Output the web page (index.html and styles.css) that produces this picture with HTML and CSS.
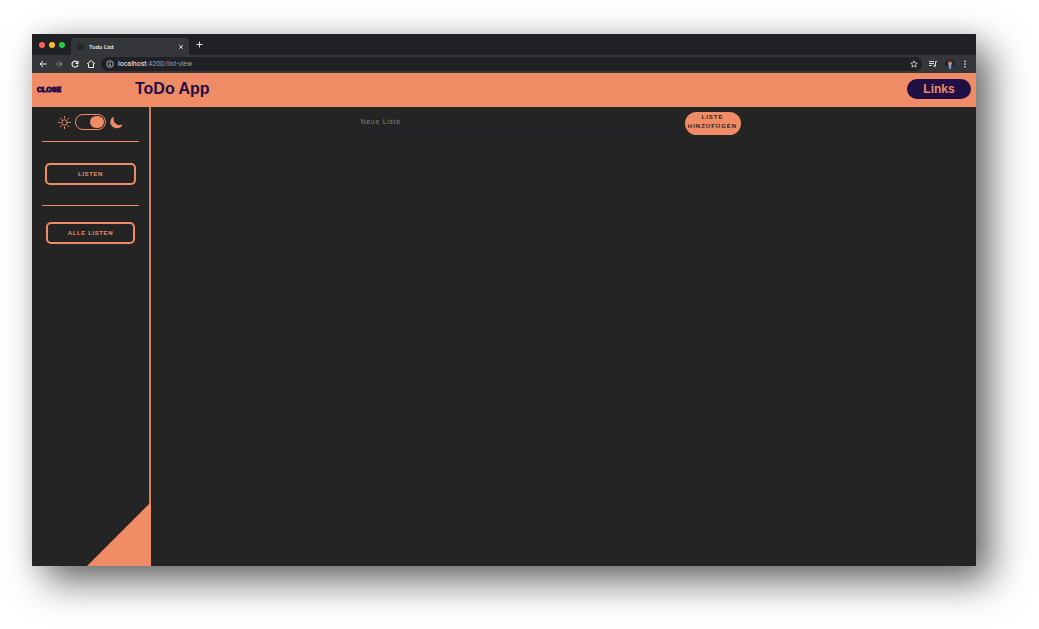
FILE: index.html
```html
<!DOCTYPE html>
<html lang="de">
<head>
<meta charset="utf-8">
<title>Todo List</title>
<link rel="stylesheet" href="styles.css">
</head>
<body>
<div class="window">
  <div class="tabbar">
    <span class="dot red"></span><span class="dot yellow"></span><span class="dot green"></span>
    <div class="tab">
      <svg class="favicon" viewBox="0 0 16 16" fill="none" stroke="#111214" stroke-width="2"><path d="M13 8v6H2V3h8M5 7l3 3 7-8"/></svg>
      <span class="tab-title">Todo List</span>
      <button class="icon-button" aria-label="Tab schließen"><svg class="tiny" viewBox="0 0 10 10" stroke="#e8eaed" stroke-width="1.500"><path d="M2 2l6 6M8 2l-6 6"/></svg></button>
    </div>
    <button class="icon-button new-tab" aria-label="Neuer Tab"><svg class="small" viewBox="0 0 14 14" stroke="#dee1e6" stroke-width="2"><path d="M7 1v12M1 7h12"/></svg></button>
  </div>
  <div class="toolbar">
    <button class="icon-button" aria-label="Zurück"><svg class="nav-icon" viewBox="0 0 16 16" fill="none" stroke="#e8eaed" stroke-width="2"><path d="M15 8H2M8 2L2 8l6 6"/></svg></button>
    <button class="icon-button" aria-label="Vor"><svg class="nav-icon" viewBox="0 0 16 16" fill="none" stroke="#85888c" stroke-width="2"><path d="M1 8h13M8 2l6 6-6 6"/></svg></button>
    <button class="icon-button" aria-label="Neu laden"><svg class="nav-icon" viewBox="0 0 16 16"><path d="M12.500 4A6 6 0 1 0 14 9.500" fill="none" stroke="#e8eaed" stroke-width="2.400"/><path d="M15 1v7H8z" fill="#e8eaed"/></svg></button>
    <button class="icon-button" aria-label="Startseite"><svg class="nav-icon" viewBox="0 0 16 16" fill="none" stroke="#e8eaed" stroke-width="2"><path d="M0 8l8-7 8 7M3 7v8h10V7"/></svg></button>
    <div class="address">
      <svg class="nav-icon" viewBox="0 0 16 16" fill="none" stroke="#dadce0" stroke-width="1.500"><circle cx="8" cy="8" r="6.500"/><path d="M8 7v5M8 4v1.700" stroke-width="2"/></svg>
      <span class="url"><span class="host">localhost</span>:4200/list-view</span>
      <button class="icon-button" aria-label="Lesezeichen"><svg class="nav-icon" viewBox="0 0 16 16" fill="none" stroke="#dadce0" stroke-width="1.600"><path d="M8 1.500l1.900 4.400 4.700.4-3.600 3.200 1.100 4.700L8 11.700l-4.100 2.500L5 9.500 1.400 6.300l4.700-.4z"/></svg></button>
    </div>
    <button class="icon-button" aria-label="Medien"><svg class="nav-icon" viewBox="0 0 16 16" fill="none" stroke="#dadce0" stroke-width="2"><path d="M0 3h10M0 7h10M0 11h6M16 3h-3v9"/><circle cx="11" cy="12" r="1.500"/></svg></button>
    <button class="icon-button" aria-label="Profil"><svg class="avatar" viewBox="0 0 20 20"><circle cx="10" cy="10" r="10" fill="#2a2328"/><path d="M3 17q1-5 7-5t7 5q-7 6-14 0z" fill="#1d4176"/><path d="M8 12h4l-1 8H9z" fill="#a9c5e6"/><ellipse cx="10" cy="8" rx="4" ry="5" fill="#c98a77"/><path d="M6 7q0-5 4-5t4 5q-4-3-8 0z" fill="#4a2a26"/></svg></button>
    <button class="icon-button menu" aria-label="Menü"><svg class="nav-icon" viewBox="0 0 16 16" fill="#e8eaed"><circle cx="8" cy="2.500" r="1.700"/><circle cx="8" cy="8" r="1.700"/><circle cx="8" cy="13.500" r="1.700"/></svg></button>
  </div>
  <header class="header">
    <button class="close">CLOSE</button>
    <h1 class="title">ToDo App</h1>
    <button class="links">Links</button>
  </header>
  <div class="content">
    <aside class="sidebar">
      <div class="theme">
        <svg class="sun" viewBox="0 0 26 26" fill="none" stroke="#f08c65" stroke-width="2" stroke-linecap="round"><circle cx="13" cy="13" r="5.500"/><path d="M13 1v3M13 22v3M1 13h3M22 13h3M4.500 4.500l2 2M19.500 19.500l2 2M4.500 21.500l2-2M19.500 6.500l2-2"/></svg>
        <input class="switch" type="checkbox" role="switch" aria-label="Dunkles Design" checked>
        <svg class="moon" viewBox="0 0 26 26" fill="#f08c65"><path d="M8 1C-1 5-2 17 6 22s17 2 19-5C14 21 4 12 8 1z"/></svg>
      </div>
      <button class="side-button">LISTEN</button>
      <div class="all">
        <button class="side-button narrow">ALLE LISTEN</button>
      </div>
      <svg class="corner" viewBox="0 0 64 64" fill="#f08c65"><path d="M64 0v64H0z"/></svg>
    </aside>
    <main class="main">
      <form class="form">
        <input class="field" type="text" placeholder="Neue Liste" aria-label="Neue Liste">
        <button class="add" type="button">LISTE HINZUFÜGEN</button>
      </form>
    </main>
  </div>
</div>
</body>
</html>
```
FILE: styles.css
```css
* { box-sizing: border-box; }
body {
  margin: 0;
  min-height: 100vh;
  padding: 34px 63px 63px 32px;
  display: flex;
  background: #fff;
  font-family: "Liberation Sans", Arial, sans-serif;
}
button { border: 0; padding: 0; background: none; font-family: inherit; font-weight: bold; cursor: pointer; }
svg { display: block; flex: none; }
.window {
  flex: 1;
  display: flex;
  flex-direction: column;
  background: #242424;
  box-shadow: 14px 15px 36px rgba(0, 0, 0, 0.6), 0 0 20px rgba(0, 0, 0, 0.08);
}
.tabbar {
  height: 21px;
  display: flex;
  align-items: center;
  padding-left: 7px;
  background: #202124;
  font-family: Roboto, sans-serif;
}
.dot { width: 6px; height: 6px; margin-right: 4px; border-radius: 50%; }
.red { background: #ff5f57; }
.yellow { background: #febc2e; }
.green { background: #28c840; }
.tab {
  align-self: flex-end;
  width: 118px;
  height: 17px;
  margin-left: 2px;
  padding: 0 5px 0 6px;
  display: flex;
  align-items: center;
  gap: 5px;
  border-radius: 4px 4px 0 0;
  background: #35363a;
}
.tab-title { flex: 1; color: #f1f3f4; font-size: 6px; font-weight: 500; }
.favicon { width: 7px; height: 7px; }
.tiny { width: 6px; height: 6px; }
.small { width: 7px; height: 7px; }
.icon-button { display: block; flex: none; }
.new-tab { margin-left: 7px; }
.toolbar {
  height: 18px;
  display: flex;
  align-items: center;
  gap: 8px;
  padding: 0 7px;
  background: #35363a;
  font-family: Roboto, sans-serif;
}
.nav-icon { width: 8px; height: 8px; }
.avatar { width: 10px; height: 10px; }
.menu { margin-left: -2px; }
.address {
  flex: 1;
  height: 14px;
  margin: 0 -1px 0 -2px;
  padding: 0 4px 0 5px;
  display: flex;
  align-items: center;
  gap: 4px;
  border-radius: 7px;
  background: #202124;
}
.url { flex: 1; color: #9aa0a6; font-size: 7px; }
.host { color: #f1f3f4; }
.header {
  height: 34px;
  display: flex;
  align-items: center;
  padding: 0 5px 2px;
  background: #f08c65;
  color: #1f0f45;
}
.close { width: 98px; text-align: left; color: #1f0f45; font-size: 7px; -webkit-text-stroke: 1px #1f0f45; }
.title { flex: 1; margin: 0; font-size: 16px; }
.links {
  width: 64px;
  height: 20px;
  border-radius: 10px;
  background: #1f0f45;
  color: #f08c65;
  font-size: 12px;
}
.content { flex: 1; display: flex; }
.sidebar {
  width: 119px;
  display: flex;
  flex-direction: column;
  align-items: center;
  border-right: 2px solid #d47c5b;
}
.theme {
  width: 97px;
  height: 35px;
  margin-bottom: 21px;
  padding-bottom: 4px;
  display: flex;
  align-items: center;
  justify-content: center;
  gap: 4px;
  border-bottom: 1px solid #f08c65;
}
.sun, .moon { width: 13px; height: 13px; }
.switch {
  appearance: none;
  width: 31px;
  height: 16px;
  margin: 0;
  padding: 1px;
  display: flex;
  justify-content: flex-end;
  border: 1px solid #f08c65;
  border-radius: 8px;
}
.switch::before { content: ""; width: 14px; height: 12px; border-radius: 6px; background: #f08c65; }
.side-button {
  width: 91px;
  height: 22px;
  padding-bottom: 1px;
  border: 2px solid #f08c65;
  border-radius: 5px;
  color: #f08c65;
  font-size: 6px;
  letter-spacing: 0.1em;
}
.all {
  width: 97px;
  margin-top: 20px;
  padding-top: 16px;
  display: flex;
  justify-content: center;
  border-top: 1px solid #f08c65;
}
.narrow { width: 89px; }
.corner { width: 64px; height: 64px; margin-top: auto; margin-right: -2px; align-self: flex-end; }
.main { flex: 1; padding: 5px 42px 5px 16px; }
.form { max-width: 380px; margin: 0 auto; display: flex; }
.field {
  flex: 1;
  min-width: 0;
  height: 20px;
  padding: 0;
  border: 0;
  border-bottom: 1px solid #211c30;
  outline: 0;
  background: none;
  color: #f08c65;
  font-family: inherit;
  font-size: 7px;
  letter-spacing: 0.1em;
}
.field::placeholder { color: #808080; }
.add {
  width: 56px;
  height: 23px;
  padding-bottom: 3px;
  border-radius: 12px;
  background: #f08c65;
  color: #242424;
  font-size: 6px;
  line-height: 9px;
  letter-spacing: 1px;
}
```
